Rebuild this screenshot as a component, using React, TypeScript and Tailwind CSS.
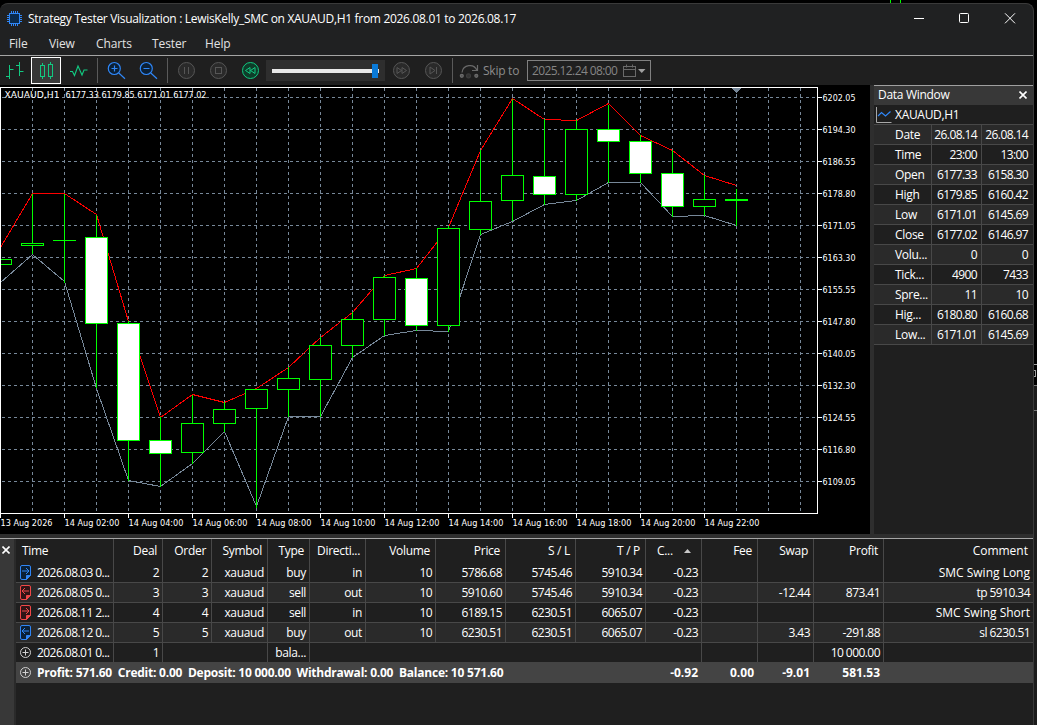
import type { ReactNode } from "react";

type Tone = "buy" | "sell" | "balance";

interface Candle {
  x: number;
  high: number;
  low: number;
  top: number;
  bottom: number;
  down?: boolean;
}

interface Deal {
  tone: Tone;
  arrow: "in" | "out" | "none";
  cells: string[];
}

const menuItems = [
  { label: "File", className: "w-10" },
  { label: "View", className: "w-[47px]" },
  { label: "Charts", className: "w-14" },
  { label: "Tester", className: "w-[53px]" },
  { label: "Help", className: "w-10" },
];

const prices = [
  "6202.05", "6194.30", "6186.55", "6178.80", "6171.05", "6163.30", "6155.55",
  "6147.80", "6140.05", "6132.30", "6124.55", "6116.80", "6109.05",
];

const times = [
  "13 Aug 2026", "14 Aug 02:00", "14 Aug 04:00", "14 Aug 06:00", "14 Aug 08:00", "14 Aug 10:00",
  "14 Aug 12:00", "14 Aug 14:00", "14 Aug 16:00", "14 Aug 18:00", "14 Aug 20:00", "14 Aug 22:00",
];

const candles: Candle[] = [
  { x: 0, high: 259, low: 264, top: 259, bottom: 264 },
  { x: 32, high: 194, low: 253, top: 243, bottom: 245 },
  { x: 64, high: 194, low: 282, top: 240, bottom: 240 },
  { x: 96, high: 215, low: 387, top: 237, bottom: 323, down: true },
  { x: 128, high: 321, low: 480, top: 323, bottom: 440, down: true },
  { x: 160, high: 417, low: 486, top: 440, bottom: 453, down: true },
  { x: 192, high: 395, low: 463, top: 423, bottom: 452 },
  { x: 224, high: 402, low: 431, top: 409, bottom: 423 },
  { x: 256, high: 389, low: 507, top: 389, bottom: 408 },
  { x: 288, high: 367, low: 416, top: 378, bottom: 389 },
  { x: 320, high: 337, low: 416, top: 345, bottom: 379 },
  { x: 352, high: 312, low: 357, top: 319, bottom: 345 },
  { x: 384, high: 275, low: 335, top: 277, bottom: 319 },
  { x: 416, high: 268, low: 330, top: 278, bottom: 325, down: true },
  { x: 448, high: 226, low: 331, top: 228, bottom: 325 },
  { x: 480, high: 150, low: 234, top: 201, bottom: 229 },
  { x: 512, high: 99, low: 220, top: 175, bottom: 200 },
  { x: 544, high: 119, low: 204, top: 176, bottom: 194, down: true },
  { x: 576, high: 120, low: 200, top: 129, bottom: 194 },
  { x: 608, high: 105, low: 182, top: 129, bottom: 141, down: true },
  { x: 640, high: 135, low: 182, top: 141, bottom: 173, down: true },
  { x: 672, high: 150, low: 216, top: 173, bottom: 206, down: true },
  { x: 704, high: 175, low: 215, top: 199, bottom: 206 },
  { x: 736, high: 189, low: 225, top: 199, bottom: 200 },
];

const upperBand = [
  247, 193, 193, 214, 321, 417, 394, 402, 388, 367, 337, 312, 275, 268, 227, 150, 98, 119, 120, 103, 135, 150, 175, 185,
];
const lowerBand = [
  282, 254, 281, 388, 480, 486, 463, 431, 506, 416, 416, 357, 335, 330, 331, 234, 221, 204, 200, 182, 182, 216, 215, 225,
];

const dataRows = [
  ["Date", "26.08.14", "26.08.14"],
  ["Time", "23:00", "13:00"],
  ["Open", "6177.33", "6158.30"],
  ["High", "6179.85", "6160.42"],
  ["Low", "6171.01", "6145.69"],
  ["Close", "6177.02", "6146.97"],
  ["Volu...", "0", "0"],
  ["Tick...", "4900", "7433"],
  ["Spre...", "11", "10"],
  ["Hig...", "6180.80", "6160.68"],
  ["Low...", "6171.01", "6145.69"],
];

const columns = [
  { label: "Deal", width: "w-[49px]" },
  { label: "Order", width: "w-[49px]" },
  { label: "Symbol", width: "w-14" },
  { label: "Type", width: "w-[42px]" },
  { label: "Directi...", width: "w-14" },
  { label: "Volume", width: "w-[70px]" },
  { label: "Price", width: "w-[70px]" },
  { label: "S / L", width: "w-[70px]" },
  { label: "T / P", width: "w-[70px]" },
  { label: "C...", width: "w-14" },
  { label: "Fee", width: "w-14" },
  { label: "Swap", width: "w-14" },
  { label: "Profit", width: "w-[70px]" },
  { label: "Comment", width: "w-[149px]" },
];

const deals: Deal[] = [
  {
    tone: "buy",
    arrow: "in",
    cells: ["2026.08.03 0...", "2", "2", "xauaud", "buy", "in", "10", "5786.68", "5745.46", "5910.34", "-0.23", "", "", "", "SMC Swing Long"],
  },
  {
    tone: "sell",
    arrow: "out",
    cells: ["2026.08.05 0...", "3", "3", "xauaud", "sell", "out", "10", "5910.60", "5745.46", "5910.34", "-0.23", "", "-12.44", "873.41", "tp 5910.34"],
  },
  {
    tone: "sell",
    arrow: "in",
    cells: ["2026.08.11 2...", "4", "4", "xauaud", "sell", "in", "10", "6189.15", "6230.51", "6065.07", "-0.23", "", "", "", "SMC Swing Short"],
  },
  {
    tone: "buy",
    arrow: "out",
    cells: ["2026.08.12 0...", "5", "5", "xauaud", "buy", "out", "10", "6230.51", "6230.51", "6065.07", "-0.23", "", "3.43", "-291.88", "sl 6230.51"],
  },
  {
    tone: "balance",
    arrow: "none",
    cells: ["2026.08.01 0...", "1", "", "", "bala...", "", "", "", "", "", "", "", "", "10 000.00", ""],
  },
];

// cells of a balance operation that run together without a divider
const mergedColumns = [1, 4, 5, 6, 7, 8];

function ChipIcon() {
  return (
    <svg className="shrink-0" width="16" height="16" viewBox="0 0 16 16" fill="none" stroke="#2f86f6" shapeRendering="crispEdges">
      <rect x="2.5" y="2.5" width="10" height="10" fill="#0b2a4a" />
      <path d="M4.5 0v2M6.5 0v2M8.5 0v2M10.5 0v2M4.5 13v2M6.5 13v2M8.5 13v2M10.5 13v2M0 4.5h2M0 6.5h2M0 8.5h2M0 10.5h2M13 4.5h2M13 6.5h2M13 8.5h2M13 10.5h2" />
    </svg>
  );
}

function TitleBar() {
  return (
    <div className="flex h-[31px] items-center pb-[2px] pl-[7px] text-white">
      <ChipIcon />
      <span className="ml-[5px] grow tracking-[-0.31px]">
        Strategy Tester Visualization : LewisKelly_SMC on XAUAUD,H1 from 2026.08.01 to 2026.08.17
      </span>
      <svg width="130" height="29" viewBox="903 4 130 29" fill="none" stroke="#fff">
        <path d="M914 18.5h10" />
        <rect x="959.5" y="13.5" width="9" height="9" rx="1" />
        <path d="M1005 13.3l10 10M1015 13.3l-10 10" />
      </svg>
    </div>
  );
}

function MenuBar() {
  return (
    <div className="flex h-[20px] items-center pb-[2px] pl-[9px] tracking-[-0.1px] text-[#e2e2e2]">
      {menuItems.map((item) => (
        <span key={item.label} className={`${item.className} shrink-0`}>
          {item.label}
        </span>
      ))}
    </div>
  );
}

function RoundIcon({ active, children }: { active?: boolean; children: ReactNode }) {
  return (
    <svg
      className="w-8 shrink-0"
      height="29"
      viewBox="-16.5 -14.5 32 29"
      fill="none"
      stroke={active ? "#12c981" : "#565656"}
    >
      <circle r="8" fill={active ? "#0e3d2a" : "#2a2a2a"} />
      {children}
    </svg>
  );
}

function Separator() {
  return <div className="h-[25px] w-px shrink-0 bg-[#5a5a5a]" />;
}

function Toolbar() {
  return (
    <div className="flex h-[29px] items-center bg-[#1f1f1f]">
      <svg className="shrink-0" width="31" height="29" viewBox="0 56 31 29" fill="none" stroke="#12c981">
        <path d="M9.5 65v14M6 76.5h3.5M9.5 69.5h4M19.5 62v14M16 65.5h3.5M19.5 71.5h4" />
      </svg>
      <div className="h-[27px] w-[30px] shrink-0 border border-white bg-[#383838]">
        <svg width="28" height="25" viewBox="32 58 28 25" fill="none" stroke="#12c981">
          <path d="M42.5 63v2.5M42.5 76.5v2.5M50.5 62v2.5M50.5 76.5v2.5" />
          <rect x="40.5" y="65.5" width="4" height="11" />
          <rect x="48.5" y="64.5" width="4" height="12" />
        </svg>
      </div>
      <svg className="shrink-0" width="36" height="29" viewBox="61 56 36 29" fill="none" stroke="#12c981" strokeWidth="1.1">
        <path d="M70 71.5h2.5l2 4 3.5-9.5 4 9 2-5h3.5" />
      </svg>
      <Separator />
      <svg className="shrink-0" width="69" height="29" viewBox="98 56 69 29" fill="none" stroke="#2f86f6" strokeWidth="1.2">
        <circle cx="114.3" cy="68.5" r="6" fill="#0b2036" />
        <path d="M118.8 73l6.2 5.7M111.5 68.5h6M114.5 65.5v6" />
        <circle cx="146.3" cy="68.5" r="6" fill="#0b2036" />
        <path d="M150.8 73l6.2 5.7M143.5 68.5h6" />
      </svg>
      <Separator />
      <div className="ml-[2px] flex shrink-0">
        <RoundIcon>
          <path d="M-2 -3.5v7M2 -3.5v7" />
        </RoundIcon>
        <RoundIcon>
          <rect x="-3" y="-3" width="6" height="6" />
        </RoundIcon>
        <RoundIcon active>
          <path d="M-.5 -3v6l-4.5 -3zM4.5 -3v6l-4.5 -3z" />
        </RoundIcon>
      </div>
      <div className="flex h-[21px] w-[119px] shrink-0 items-center bg-[#2e2e2e] pl-[6px]">
        <div className="h-1 w-[100px] bg-[#e8e8e8]" />
        <div className="h-[14px] w-[6px] bg-[#0a7ad8]" />
        <div className="h-1 w-px bg-[#e8e8e8]" />
      </div>
      <div className="flex shrink-0">
        <RoundIcon>
          <path d="M.5 -3v6l4.5 -3zM-4.5 -3v6l4.5 -3z" />
        </RoundIcon>
        <RoundIcon>
          <path d="M-3.5 -3.5v7l5 -3.5zM3 -3.5v7" />
        </RoundIcon>
      </div>
      <div className="ml-[3px] flex shrink-0 items-center">
        <Separator />
        <svg width="30" height="29" viewBox="453 56 30 29" fill="none" stroke="#6a6a6a" strokeWidth="1.2">
          <path d="M462 72.5c1-8 12-9.5 15-2M477.5 65v5.5h-5.5" />
          <circle cx="461.8" cy="75.8" r="1.5" fill="#555" />
          <circle cx="468.5" cy="75.8" r="2" fill="#333" stroke="#3c3c3c" />
          <circle cx="476.3" cy="75.8" r="1.5" fill="#555" />
        </svg>
        <span className="w-11 tracking-[-0.25px] text-[#8c8c8c]">Skip to</span>
        <div className="flex h-[21px] w-[124px] items-center border border-[#808080] pl-1 text-[#858585]">
          <span className="w-[91px] shrink-0 tracking-[-0.6px]">2025.12.24 08:00</span>
          <svg className="shrink-0" width="24" height="14" viewBox="623 64 24 14" fill="none" stroke="#6a6a6a">
            <rect x="623.5" y="66.5" width="12" height="10" />
            <path d="M623.5 69.5h12M626.5 64.5v3M632.5 64.5v3" />
            <path d="M638 69h7.5l-3.75 4z" fill="#a0a0a0" stroke="none" />
          </svg>
        </div>
      </div>
    </div>
  );
}

function bandPoints(values: number[]) {
  return values.map((y, i) => `${i * 32 + 0.5},${y + 0.5}`).join(" ");
}

function Chart() {
  return (
    <svg
      className="block shrink-0 bg-black font-['DejaVu_Sans_Condensed','DejaVu_Sans',sans-serif] text-[9.5px] tracking-normal [font-stretch:condensed]"
      width="870"
      height="449"
      viewBox="0 85 870 449"
      fill="none"
      shapeRendering="crispEdges"
    >
      <g stroke="#778899" strokeDasharray="3 3">
        {prices.map((price, i) => (
          <path key={price} d={`M2 ${97.5 + i * 32}H817`} />
        ))}
        {Array.from({ length: 25 }, (_, i) => (
          <path key={i} d={`M${32.5 + i * 32} 88V511`} />
        ))}
      </g>
      <path d="M731 88h11l-5.5 5z" fill="#778899" />
      <polyline points={bandPoints(lowerBand)} stroke="#778899" />
      <polyline points={bandPoints(upperBand)} stroke="#f00" />
      {candles.map((c) => (
        <g key={c.x} stroke="#0f0">
          <path d={`M${c.x + 0.5} ${c.high}V${c.low + 1}`} />
          {c.bottom - c.top > 1 ? (
            <rect x={c.x - 10.5} y={c.top + 0.5} width="22" height={c.bottom - c.top} fill={c.down ? "#fff" : "#000"} />
          ) : (
            <path d={`M${c.x - 11} ${(c.top + c.bottom + 1) / 2}h23`} strokeWidth={c.bottom - c.top + 1} />
          )}
        </g>
      ))}
      <path d="M0.5 513.5V87.5H817.5V513.5z" stroke="#fff" />
      {prices.map((price, i) => (
        <g key={price}>
          <path d={`M818 ${97.5 + i * 32}h4`} stroke="#fff" />
          <text x="822.5" y={101 + i * 32} textLength="33" lengthAdjust="spacingAndGlyphs" fill="#fff">
            {price}
          </text>
        </g>
      ))}
      {times.map((time, i) => (
        <g key={time}>
          <path d={`M${i * 64 + 0.5} 514v4`} stroke="#fff" />
          <text x={i * 64 + 0.5} y="526" textLength={i === 0 ? 52 : 55} lengthAdjust="spacingAndGlyphs" fill="#fff">
            {time}
          </text>
        </g>
      ))}
      <text x="4.5" y="98" textLength="55" lengthAdjust="spacingAndGlyphs" fill="#fff">
        XAUAUD,H1
      </text>
      <text x="65.5" y="98" textLength="141" lengthAdjust="spacingAndGlyphs" fill="#fff">
        6177.33 6179.85 6171.01 6177.02
      </text>
    </svg>
  );
}

function CloseGlyph() {
  return (
    <svg width="8" height="8" viewBox="0 0 8 8" stroke="#fff" strokeWidth="1.6">
      <path d="M.5 .5l7 7M7.5 .5l-7 7" />
    </svg>
  );
}

function DataWindow() {
  return (
    <aside className="ml-1 flex w-[159px] shrink-0 flex-col border-t border-[#a0a0a0] bg-[#1f1f1f] text-white">
      <div className="flex h-[19px] items-center justify-between bg-[#383838] pr-[6px] pb-[2px] pl-1">
        <span>Data Window</span>
        <CloseGlyph />
      </div>
      <div className="flex h-5 items-center border-b border-[#484848] pl-[2px]">
        <svg width="19" height="16" viewBox="0 0 19 16" fill="none">
          <path d="M.5 0v15.5h15" stroke="#a8a8a8" />
          <path d="M2 9l3.5-3.5 4 3.5 5-4.5" stroke="#2f86f6" strokeWidth="1.2" />
        </svg>
        <span>XAUAUD,H1</span>
      </div>
      {dataRows.map(([label, first, second], i) => (
        <div
          key={label}
          className={`flex h-5 items-center border-b border-[#484848] leading-[19px] ${i % 2 ? "bg-[#1f1f1f]" : "bg-[#2a2a2a]"}`}
        >
          <span className="w-[58px] border-r border-[#484848] pl-[21px]">{label}</span>
          <span className="w-[50px] border-r border-[#484848] pr-1 text-right tracking-[-0.6px]">{first}</span>
          <span className="w-[51px] pr-[5px] text-right tracking-[-0.6px]">{second}</span>
        </div>
      ))}
    </aside>
  );
}

function DealIcon({ tone, arrow }: { tone: Tone; arrow: Deal["arrow"] }) {
  if (tone === "balance") {
    return (
      <svg className="shrink-0" width="12" height="12" viewBox="0 0 12 12" fill="none" stroke="#d0d0d0">
        <circle cx="5.5" cy="5.5" r="5" />
        <path d="M2.5 5.5h6M5.5 2.5v6" />
      </svg>
    );
  }
  const color = tone === "buy" ? "#2f86f6" : "#f04848";
  return (
    <svg className="shrink-0" width="12" height="16" viewBox="0 0 12 16" fill="none" stroke={color}>
      <path
        d="M2 .5h7q1.5 0 1.5 1.5v8.5l-4 4h-4.500q-1.500 0 -1.500 -1.500v-11q0 -1.500 1.500 -1.500z"
        fill={tone === "buy" ? "#0b2036" : "#301416"}
      />
      <path d="M10.500 10.500h-4v4z" fill={color} />
      <path d={arrow === "in" ? "M2 6h7M6 3l3 3-3 3" : "M2 6h7M5 3l-3 3 3 3"} />
    </svg>
  );
}

// digits are set tighter than words
function cellTracking(text: string) {
  if (/\d/.test(text)) return "tracking-[-0.55px]";
  return text.startsWith("SMC") ? "tracking-normal" : "tracking-[-0.35px]";
}

function DealsTable() {
  return (
    <div className="flex grow flex-col text-white">
      <div className="flex h-6 items-center leading-[24px]">
        <span className="w-[98px] border-r border-[#484848] pl-[6px]">Time</span>
        {columns.map((column) => (
          <span
            key={column.label}
            className={`${column.width} h-6 border-[#484848] pr-[5px] text-right not-last:border-r last:tracking-normal`}
          >
            {column.label === "C..." ? (
              <span className="flex h-6 items-center justify-between pr-[5px] pl-[11px]">
                C...
                <svg width="7" height="4" viewBox="0 0 7 4">
                  <path d="M0 4h7l-3.500 -4z" fill="#c8c8c8" />
                </svg>
              </span>
            ) : (
              column.label
            )}
          </span>
        ))}
      </div>
      {deals.map((deal, i) => (
        <div
          key={deal.cells[0]}
          className={`flex border-[#484848] leading-[19px] ${i < 4 ? "h-5 border-b" : "h-[19px]"} ${i % 2 ? "bg-[#2a2a2a]" : "bg-[#1f1f1f]"}`}
        >
          <div className="flex w-[98px] items-center border-r border-[#484848] pl-1">
            <DealIcon tone={deal.tone} arrow={deal.arrow} />
            <span className="ml-[5px] tracking-[-0.55px]">{deal.cells[0]}</span>
          </div>
          {columns.map((column, c) => (
            <span
              key={column.label}
              className={`${column.width} ${cellTracking(deal.cells[c + 1])} pr-[3px] text-right not-last:border-r ${
                deal.tone === "balance" && mergedColumns.includes(c) ? "border-transparent" : "border-[#484848]"
              }`}
            >
              {deal.cells[c + 1]}
            </span>
          ))}
        </div>
      ))}
      <div className="flex h-[21px] items-center bg-[#444] pl-1 font-bold tracking-normal">
        <DealIcon tone="balance" arrow="none" />
        <span className="ml-[5px] w-[609px] tracking-[-0.23px] whitespace-pre">
          Profit: 571.60  Credit: 0.00  Deposit: 10 000.00  Withdrawal: 0.00  Balance: 10 571.60
        </span>
        <span className="w-[52px] text-right">-0.92</span>
        <span className="w-14 text-right">0.00</span>
        <span className="w-14 text-right">-9.01</span>
        <span className="w-[70px] text-right">581.53</span>
      </div>
    </div>
  );
}

export default function App() {
  return (
    <div className="relative h-[725px] w-[1037px] overflow-hidden bg-black pt-[3px] font-['Open_Sans','Noto_Sans',sans-serif] text-[12px] leading-none tracking-[-0.3px] whitespace-nowrap">
      <div className="h-[722px] w-[1034px] overflow-hidden rounded-t-lg border-t border-r border-[#3a3a3a] bg-[#202122]">
        <TitleBar />
        <MenuBar />
        <div className="h-px bg-[#a5a5a5]" />
        <Toolbar />
        <div className="flex h-[449px] bg-[#2e2e2e]">
          <Chart />
          <DataWindow />
        </div>
        <div className="h-1 bg-[#2e2e2e]" />
        <div className="flex h-[187px] border-t border-[#a5a5a5] bg-[#1f1f1f]">
          <div className="w-4 shrink-0 border-r-2 border-[#2a2a2a] bg-[#383838] pt-[7px] pl-[2px]">
            <CloseGlyph />
          </div>
          <DealsTable />
        </div>
      </div>
      {/* slice of the terminal behind this window */}
      <svg className="absolute top-0 left-0" width="1037" height="725" viewBox="0 0 1037 725" fill="none" shapeRendering="crispEdges">
        <path d="M890.5 0v3M900.5 0v3" stroke="#0f0" />
        <path d="M1034 364.5h3" stroke="#a0a0a0" />
        <path d="M1034 370.5h1.5v6h-1.5" stroke="#a0a0a0" />
        <path d="M1034 385h3v340h-3z" fill="#1c1c1c" />
        <path d="M1034 385.5h3M1034 410.5h3" stroke="#777" />
      </svg>
    </div>
  );
}
